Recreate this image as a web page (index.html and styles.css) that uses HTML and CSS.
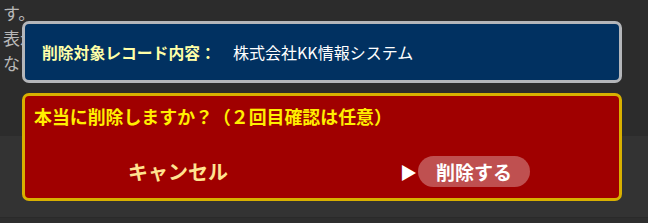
FILE: index.html
```html
<!DOCTYPE html>
<html lang="ja">
<head>
<meta charset="utf-8">
<link rel="stylesheet" href="styles.css">
</head>
<body>
<div class="page">
  <div class="page-top">
    <p class="bg-line">す。</p>
    <p class="bg-line">表示</p>
    <p class="bg-line">ない</p>
  </div>
  <div class="page-mid"></div>
  <div class="page-bottom"></div>
</div>
<div class="modal">
  <div class="record-box">
    <span class="record-label">削除対象レコード内容：</span>
    <span class="record-value">株式会社KK情報システム</span>
  </div>
  <div class="confirm-box">
    <div class="confirm-title">本当に削除しますか？（２回目確認は任意）</div>
    <div class="confirm-actions">
      <button class="btn-cancel">キャンセル</button>
      <div class="delete-wrap">
        <span class="arrow">▶</span>
        <button class="btn-delete">削除する</button>
      </div>
    </div>
  </div>
</div>
</body>
</html>
```
FILE: styles.css
```css
html, body {
  margin: 0;
  padding: 0;
  height: 100%;
  overflow: hidden;
}
body {
  background: #2d2d2d;
  font-family: "Noto Sans CJK JP", "Noto Sans", sans-serif;
  position: relative;
}
.page {
  display: flex;
  flex-direction: column;
  height: 223px;
}
.page-top {
  height: 136px;
  background: #2c2c2c;
  box-sizing: border-box;
}
.bg-line {
  margin: 0;
  padding-left: 3px;
  font-size: 17px;
  line-height: 25px;
  color: #b8b8b8;
}
.page-mid {
  height: 81px;
  background: #333333;
}
.page-bottom {
  flex: 1;
  background: #2e2e2e;
  border-top: 1px solid #2a2a2a;
}
.modal {
  position: absolute;
  left: 22px;
  top: 21px;
  width: 600px;
  display: flex;
  flex-direction: column;
  gap: 10px;
}
.record-box {
  box-sizing: border-box;
  height: 62px;
  background: #013161;
  border: 3px solid #b4b6ba;
  border-radius: 7px;
  display: flex;
  align-items: center;
  padding-left: 17px;
}
.record-label {
  font-size: 15.8px;
  font-weight: bold;
  color: #ffffa8;
  width: 191px;
}
.record-value {
  font-size: 16px;
  color: #ffffff;
}
.confirm-box {
  box-sizing: border-box;
  height: 108px;
  background: #a00000;
  border: 3px solid #d8b000;
  border-radius: 7px;
  padding: 9px 8px 0 9px;
  display: flex;
  flex-direction: column;
}
.confirm-title {
  font-size: 17.9px;
  font-weight: bold;
  color: #ffee00;
  line-height: 22px;
}
.confirm-actions {
  display: flex;
  align-items: center;
  margin-top: 29px;
}
.btn-cancel {
  background: none;
  border: none;
  font-family: inherit;
  font-size: 20px;
  font-weight: bold;
  color: #ffe390;
  padding: 0;
  margin-left: 94px;
  line-height: 31px;
}
.delete-wrap {
  display: flex;
  align-items: center;
  margin-left: 172px;
}
.arrow {
  color: #ffffff;
  font-size: 17px;
  line-height: 31px;
  margin-right: 1px;
}
.btn-delete {
  background: #bf5050;
  border: none;
  border-radius: 16px;
  width: 112px;
  height: 31px;
  font-family: inherit;
  font-size: 19px;
  font-weight: bold;
  color: #ffffff;
  padding: 0;
  line-height: 31px;
}
```
